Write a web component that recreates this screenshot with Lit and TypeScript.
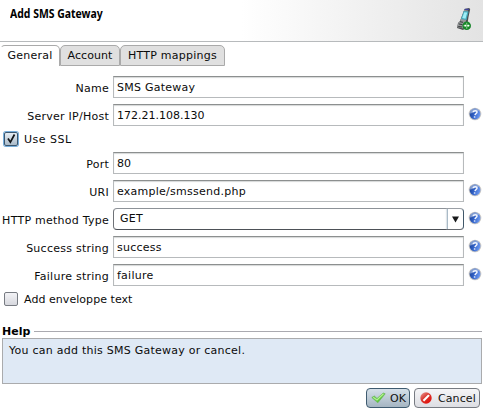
import { LitElement, html, css } from "lit";
import { customElement, property } from "lit/decorators.js";

@customElement("help-icon")
class HelpIcon extends LitElement {
  static styles = css`
    :host { display: block; width: 14px; height: 14px; }
    svg { display: block; }
  `;
  render() {
    return html`<svg width="14" height="14" viewBox="0 0 14 14">
      <defs><linearGradient id="g" x1="0" y1=".3" x2="1" y2=".6">
        <stop offset="0" stop-color="#1d459c" /><stop offset=".4" stop-color="#2f5fc4" /><stop offset="1" stop-color="#6f9cf4" />
      </linearGradient></defs>
      <circle cx="7" cy="7" r="6.3" fill="#cbc9c6" />
      <circle cx="7" cy="7" r="5.4" fill="url(#g)" />
      <path d="M1.9 6.4C2 3.5 4 1.6 7 1.6C9 1.6 10.6 2.5 11.4 3.8C8 3.4 5.5 6.6 1.9 6.4Z" fill="#9fb4dc" opacity=".75" />
      <path d="M5 5.1C5.6 3.5 9.3 3.3 9 5.2C8.8 6.5 7.3 6.6 7 8.2M6.7 9.3L6.5 10.6" fill="none" stroke="#f2f6ff" stroke-width="1.5" />
    </svg>`;
  }
}

@customElement("form-row")
class FormRow extends LitElement {
  @property() label = "";
  @property() value = "";
  @property({ type: Boolean }) help = false;
  @property({ type: Boolean }) select = false;
  @property({ type: Boolean }) numeric = false;
  static styles = css`
    :host { display: grid; grid-template-columns: 109px 351px 14px; column-gap: 4px; height: 22px; align-items: center; }
    .label { text-align: right; white-space: nowrap; line-height: 14px; padding-top: 4px; }
    .field { box-sizing: border-box; height: 22px; border: 1px solid #b7babc; border-top-color: #8c8f8f; box-shadow: inset 0 1px 1px #d5d8d8; padding-left: 3px; line-height: 21px; white-space: nowrap; background: #fff; }
    .numeric { letter-spacing: 0; }
    .combo { display: flex; justify-content: space-between; box-sizing: border-box; height: 22px; border: 1px solid #6f7277; border-top-color: #8d9298; border-bottom-color: #4d5157; border-right-color: #41586a; border-radius: 4px; padding-left: 6px; line-height: 20px; }
    .arrow { width: 15px; border-left: 1px solid #a9bac7; box-shadow: -1px 0 1px #dfe5e9; display: flex; align-items: center; justify-content: center; }
    .help { align-self: start; margin-top: 3px; }
  `;
  render() {
    return html`<span class="label">${this.label}</span>
      ${this.select
        ? html`<div class="combo"><span>${this.value}</span><span class="arrow"><svg width="7" height="7"><path d="M0 .5H7L3.5 6.5Z" fill="#18191b" /></svg></span></div>`
        : html`<div class="field ${this.numeric ? "numeric" : ""}">${this.value}</div>`}
      ${this.help ? html`<help-icon class="help"></help-icon>` : null}`;
  }
}

@customElement("app-root")
class AppRoot extends LitElement {
  static styles = css`
    :host { display: flex; flex-direction: column; width: 483px; height: 412px; overflow: hidden; background: #fff; color: #0b0b0b; font: 11px "DejaVu Sans", sans-serif; letter-spacing: 0.25px; }
    .header { box-sizing: border-box; flex: none; height: 42px; border-bottom: 1px solid #b7babc; background: linear-gradient(90deg, #fff 50%, #e3e3e3); display: flex; justify-content: space-between; padding: 7px 11px 0 10px; }
    .title { font: bold 12px/14px "Noto Sans", sans-serif; letter-spacing: 0; color: #000; transform: scaleX(0.87); transform-origin: left; white-space: nowrap; }
    .tabs { display: flex; flex: none; margin-top: 3px; height: 21px; }
    .tab { box-sizing: border-box; height: 21px; border: 1px solid #aaa; border-radius: 5px 5px 0 0; background: #e0e0e0; line-height: 19px; text-align: center; white-space: nowrap; }
    .general { width: 60px; background: #fff; border-bottom: 0; border-left-color: transparent; }
    .account { width: 60px; letter-spacing: 0.05px; }
    .mappings { width: 105px; }
    .form { display: flex; flex-direction: column; gap: 6px; padding-top: 10px; flex: none; }
    .check { display: flex; align-items: center; gap: 6px; height: 14px; padding-left: 4px; white-space: nowrap; letter-spacing: 0.05px; }
    .box { box-sizing: border-box; width: 14px; height: 14px; border: 1px solid #777b82; border-radius: 2px; background: linear-gradient(#f3f3f6, #d7d8de); }
    .checked { border-color: #39566f; background: linear-gradient(#e5edf4, #aabac8); box-shadow: 0 0 0 1px #78aedb; }
    .ssl { letter-spacing: 0.5px; }
    .box svg { display: block; }
    .helphead { display: flex; align-items: center; gap: 4px; height: 14px; margin-top: 18px; padding-left: 2px; font-weight: bold; letter-spacing: 0; color: #000; flex: none; }
    .rule { height: 1px; flex: 1; background: #aaaab0; margin-right: 1px; }
    .helpbox { box-sizing: border-box; flex: none; width: 480px; height: 46px; margin-left: 2px; border: 1px solid #aaabad; background: #dfe9f5; padding: 5px 6px; line-height: 14px; }
    .actions { display: flex; flex: none; justify-content: flex-end; gap: 4px; margin: 4px 3px 0 0; }
    .button { box-sizing: border-box; height: 20px; border: 1px solid #777b82; border-radius: 4px; background: linear-gradient(#f5f5f7, #dddee3); display: flex; align-items: center; gap: 5px; padding-left: 4px; white-space: nowrap; color: #111; letter-spacing: 0.1px; }
    .ok { width: 44px; gap: 4px; border-color: #3f5b70; background: linear-gradient(#d5e0e9, #a5b5c2); }
    .cancel { width: 66px; }
  `;
  render() {
    return html`
      <div class="header">
        <span class="title">Add SMS Gateway</span>
        <svg width="17" height="24" viewBox="0 0 17 24">
          <path d="M9.5 2L14 1L15.2 2L13.5 10L12 20L8 23L2 21L3 16L5 14Z" fill="#4c4e50" />
          <path d="M9.2 3L13 3.5L10.8 15L8.5 21.5L2.4 20.3L3.5 16L5.3 14Z" fill="#96999a" />
          <path d="M8.8 4L13.6 4.5L11.5 13L6 12Z" fill="#45a9ba" />
          <path d="M9.3 5.2L12.2 5.6L10.5 11.8L7.2 11Z" fill="#9eeff6" />
          <path d="M9.8 2.3H14" stroke="#3f41ad" /><path d="M5 14.7L8 15.3M4 17L7.5 17.6M3.3 19.5L7 20" stroke="#35383a" />
          <circle cx="11.7" cy="18.7" r="4.3" fill="#17852a" />
          <path d="M8.6 18.7H14.8M11.7 15.7V17.8M11.7 19.6V21.8" stroke="#7dce7d" stroke-width="1.2" />
          <path d="M9.5 18.7H11M12.4 18.7H14" stroke="#fff" stroke-width="1.8" />
        </svg>
      </div>
      <div class="tabs">
        <div class="tab general">General</div>
        <div class="tab account">Account</div>
        <div class="tab mappings">HTTP mappings</div>
      </div>
      <div class="form">
        <form-row label="Name" value="SMS Gateway"></form-row>
        <form-row label="Server IP/Host" value="172.21.108.130" numeric help></form-row>
        <div class="check ssl"><span class="box checked"><svg width="12" height="12"><path d="M3 5.5L5.4 9.2L9.5 1.5" fill="none" stroke="#101418" stroke-width="1.7" /></svg></span><span>Use SSL</span></div>
        <form-row label="Port" value="80" numeric></form-row>
        <form-row label="URI" value="example/smssend.php" help></form-row>
        <form-row label="HTTP method Type" value="GET" select help></form-row>
        <form-row label="Success string" value="success" help></form-row>
        <form-row label="Failure string" value="failure" help></form-row>
        <div class="check"><span class="box"></span><span>Add enveloppe text</span></div>
      </div>
      <div class="helphead"><span>Help</span><span class="rule"></span></div>
      <div class="helpbox">You can add this SMS Gateway or cancel.</div>
      <div class="actions">
        <div class="button ok"><svg width="15" height="12"><path d="M.8 5.5L3.3 4L6 6.5L12.2 1L14.2 1.8L6.8 10.8Z" fill="#5cc93c" stroke="#6fb560" stroke-width=".7" /><path d="M2.2 5.3L6 8L12.5 1.8" fill="none" stroke="#b4f193" stroke-width="1.2" /></svg><span>OK</span></div>
        <div class="button cancel"><svg width="14" height="12">
          <defs><linearGradient id="r" x1="0" y1="0" x2=".8" y2="1"><stop offset="0" stop-color="#e9a19b" /><stop offset=".5" stop-color="#d8332b" /><stop offset="1" stop-color="#e60f0a" /></linearGradient></defs>
          <circle cx="7" cy="6" r="5.7" fill="url(#r)" /><path d="M3.7 8L9.2 2.5L10.8 3.7L5.2 9.4Z" fill="#fff" /></svg><span>Cancel</span></div>
      </div>
    `;
  }
}
